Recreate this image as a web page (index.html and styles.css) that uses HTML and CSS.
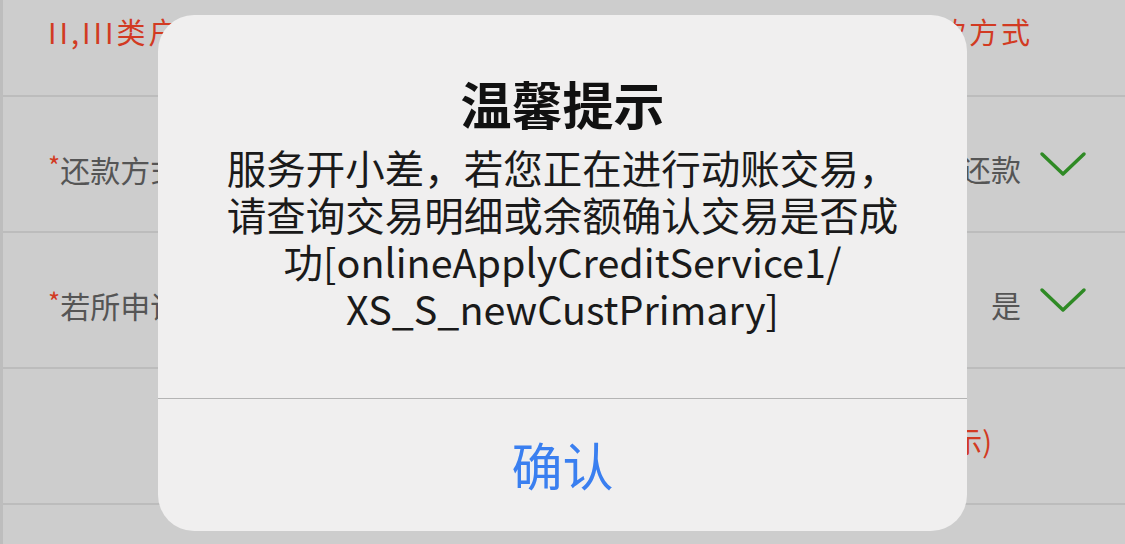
FILE: index.html
```html
<!DOCTYPE html>
<html lang="zh-CN">
<head>
    <meta charset="UTF-8">
    <meta name="viewport" content="width=device-width, initial-scale=1.0">
    <title>温馨提示</title>
    <link rel="stylesheet" href="styles.css">
</head>
<body>
    <div class="form-page">
        <div class="row row-note">
            <span class="note">II,III类户不支持自动还款，</span>
            <span class="note">请选择其他还款方式</span>
        </div>
        <div class="row">
            <span class="label"><i class="req">*</i>还款方式</span>
            <span class="value">等额本息还款
                <svg class="arrow" width="48" height="26" viewBox="0 0 48 26"><polyline points="3,3 24,23 45,3" fill="none" stroke="#2f8a25" stroke-width="3.5" stroke-linecap="round" stroke-linejoin="round"/></svg>
            </span>
        </div>
        <div class="row">
            <span class="label"><i class="req">*</i>若所申请额度用于经营</span>
            <span class="value">是
                <svg class="arrow" width="48" height="26" viewBox="0 0 48 26"><polyline points="3,3 24,23 45,3" fill="none" stroke="#2f8a25" stroke-width="3.5" stroke-linecap="round" stroke-linejoin="round"/></svg>
            </span>
        </div>
        <div class="row">
            <span class="label"></span>
            <span class="value red tip">(点击查看填写提示)</span>
        </div>
        <div class="row"></div>
    </div>

    <!-- 弹窗 -->
    <div class="alert-box">
        <div class="alert-body">
            <h2>温馨提示</h2>
            <p>服务开小差，若您正在进行动账交易，<br>请查询交易明细或余额确认交易是否成<br>功[onlineApplyCreditService1/<br>XS_S_newCustPrimary]</p>
        </div>
        <div class="alert-btn">确认</div>
    </div>
</body>
</html>
```

FILE: styles.css
```css
body {
    margin: 0;
    font-family: 'Noto Sans CJK SC', 'Noto Sans', sans-serif;
    background: #cdcdcd;
    overflow: hidden;
}
.form-page {
    height: 544px;
    overflow: hidden;
    border-left: 3px solid #bdbdbd;
    background: #cdcdcd;
}
.row {
    height: 134px;
    display: flex;
    align-items: center;
    justify-content: space-between;
    padding: 0 38px 0 45px;
    border-bottom: 2px solid #bcbcbc;
    color: #555;
    font-size: 30px;
}
.row-note {
    height: 97px;
    align-items: flex-start;
    padding-top: 8px;
    box-sizing: border-box;
    padding-right: 92px;
}
.note {
    color: #d23a22;
    font-size: 29px;
    letter-spacing: 3px;
    line-height: 46px;
    white-space: nowrap;
}
.label {
    white-space: nowrap;
    padding-top: 8px;
}
.req {
    font-style: normal;
    color: #d23a22;
    font-size: 26px;
    vertical-align: 6px;
}
.value {
    display: flex;
    align-items: center;
    gap: 18px;
    white-space: nowrap;
    padding-top: 8px;
}
.arrow {
    margin-top: -8px;
}
.red {
    color: #d23a22;
}
.tip {
    margin-right: 95px;
    font-size: 29px;
}
.alert-box {
    position: absolute;
    left: 158px;
    top: 15px;
    width: 809px;
    height: 516px;
    background: #f0efef;
    border-radius: 36px;
    display: flex;
    flex-direction: column;
    overflow: hidden;
}
.alert-body {
    height: 384px;
    border-bottom: 1px solid #b4b4b4;
    text-align: center;
    padding-top: 57px;
    box-sizing: border-box;
}
.alert-body h2 {
    margin: 0;
    font-size: 51px;
    line-height: 62px;
    font-weight: bold;
    color: #111;
}
.alert-body p {
    margin: 9px 0 0;
    font-size: 39.5px;
    line-height: 47px;
    color: #1a1a1a;
}
.alert-btn {
    flex: 1;
    display: flex;
    align-items: center;
    justify-content: center;
    padding-bottom: 2px;
    font-size: 51px;
    color: #3a7ff0;
}
```
